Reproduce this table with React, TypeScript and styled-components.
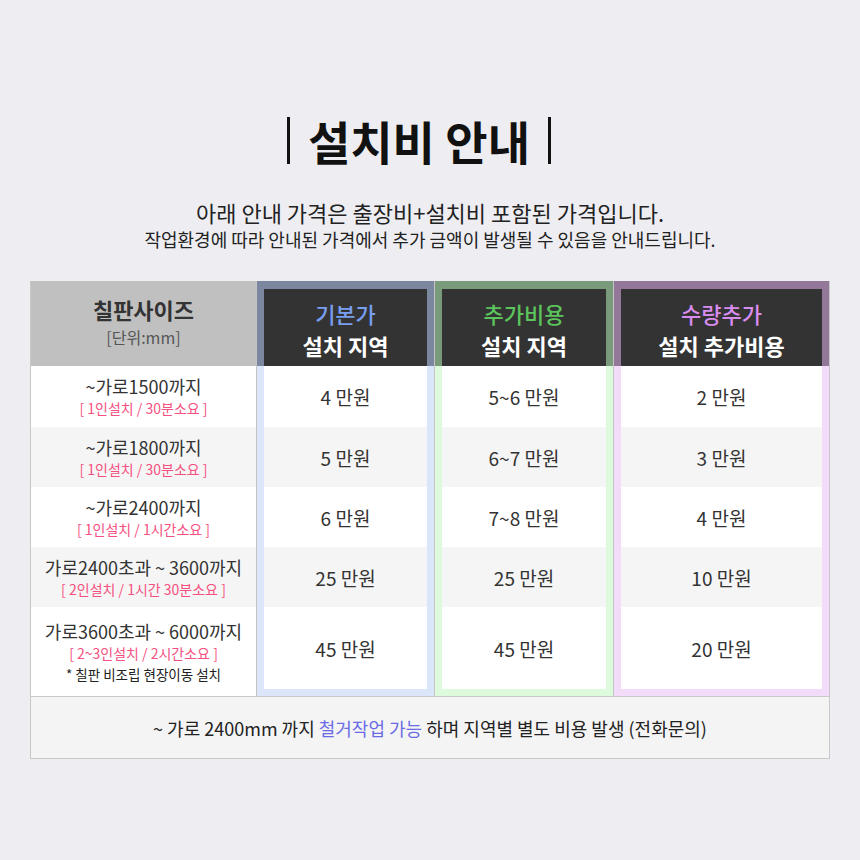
import styled, { createGlobalStyle } from 'styled-components'

const GlobalStyle = createGlobalStyle`
  html, body {
    margin: 0;
    padding: 0;
    background: #eeeef2;
  }
  body {
    font-family: 'Noto Sans CJK KR', 'Noto Sans', sans-serif;
    color: #333;
  }
`

const ROW_HEIGHTS = [61, 60, 60, 60, 89]
const FRAME = 7

type SizeRow = { main: string; sub: string; note?: string }

const sizes: SizeRow[] = [
  { main: '~가로1500까지', sub: '[ 1인설치 / 30분소요 ]' },
  { main: '~가로1800까지', sub: '[ 1인설치 / 30분소요 ]' },
  { main: '~가로2400까지', sub: '[ 1인설치 / 1시간소요 ]' },
  { main: '가로2400초과 ~ 3600까지', sub: '[ 2인설치 / 1시간 30분소요 ]' },
  { main: '가로3600초과 ~ 6000까지', sub: '[ 2~3인설치 / 2시간소요 ]', note: '* 칠판 비조립 현장이동 설치' },
]

const priceColumns = [
  {
    title: '기본가',
    subtitle: '설치 지역',
    accent: '#789ff0',
    frame: '#7b879f',
    tint: '#dce6fa',
    prices: ['4 만원', '5 만원', '6 만원', '25 만원', '45 만원'],
  },
  {
    title: '추가비용',
    subtitle: '설치 지역',
    accent: '#5cc45c',
    frame: '#7a9b7b',
    tint: '#ddfadc',
    prices: ['5~6 만원', '6~7 만원', '7~8 만원', '25 만원', '45 만원'],
  },
  {
    title: '수량추가',
    subtitle: '설치 추가비용',
    accent: '#d98cf0',
    frame: '#94789a',
    tint: '#f3dcfa',
    prices: ['2 만원', '3 만원', '4 만원', '10 만원', '20 만원'],
  },
]

const Page = styled.div`
  width: 860px;
  min-height: 860px;
  padding-top: 112px;
  box-sizing: border-box;
`

const TitleRow = styled.h1`
  margin: 0;
  padding-right: 22px;
  display: flex;
  align-items: center;
  justify-content: center;
  gap: 18px;
  height: 56px;
  font-size: 46px;
  font-weight: 700;
  color: #111;
`

const TitleBar = styled.span`
  display: block;
  width: 3px;
  height: 47px;
  background: #111;
`

const Lead = styled.p<{ $size: number; $lh: number }>`
  margin: 0;
  text-align: center;
  font-size: ${({ $size }) => $size}px;
  line-height: ${({ $lh }) => $lh}px;
  color: #222;
`

const Intro = styled.div`
  margin-top: 30px;
  margin-bottom: 29px;
`

const Table = styled.div`
  margin: 0 30px;
  width: 800px;
  box-sizing: border-box;
  border: 1px solid #c8c8c8;
  border-top: none;
  background: #fff;
`

const Grid = styled.div`
  display: grid;
  grid-template-columns: 225px 178px 179px 1fr;
`

const Column = styled.div<{ $divider?: boolean }>`
  display: flex;
  flex-direction: column;
  border-left: ${({ $divider }) => ($divider ? '1px solid #c4c4c4' : 'none')};
`

const SizeHead = styled.div`
  height: 85px;
  background: #c0c0c0;
  display: flex;
  flex-direction: column;
  align-items: center;
  justify-content: center;
  padding-bottom: 3px;
  box-sizing: border-box;
`

const SizeHeadTitle = styled.div`
  font-size: 22px;
  line-height: 30px;
  font-weight: 700;
  color: #333;
`

const SizeHeadUnit = styled.div`
  font-size: 16px;
  line-height: 26px;
  color: #555;
`

const Cell = styled.div<{ $h: number; $alt: boolean }>`
  height: ${({ $h }) => $h}px;
  background: ${({ $alt }) => ($alt ? '#f5f5f5' : '#fff')};
  display: flex;
  flex-direction: column;
  align-items: center;
  justify-content: center;
  text-align: center;
`

const SizeMain = styled.div`
  font-size: 18px;
  line-height: 24px;
  color: #333;
`

const SizeSub = styled.div`
  font-size: 14px;
  line-height: 21px;
  color: #f5507f;
`

const SizeNote = styled.div`
  font-size: 13.5px;
  line-height: 21px;
  color: #222;
`

const PriceHead = styled.div<{ $frame: string }>`
  height: 85px;
  box-sizing: border-box;
  border: ${FRAME}px solid ${({ $frame }) => $frame};
  border-top-width: 8px;
  border-bottom: none;
  background: #333;
  display: flex;
  flex-direction: column;
  align-items: center;
  justify-content: center;
  padding-top: 2px;
`

const PriceHeadTitle = styled.div<{ $accent: string }>`
  font-size: 22px;
  line-height: 32px;
  font-weight: 500;
  color: ${({ $accent }) => $accent};
`

const PriceHeadSub = styled.div`
  font-size: 22px;
  line-height: 32px;
  font-weight: 700;
  color: #fff;
`

const PriceBody = styled.div<{ $tint: string }>`
  border: ${FRAME}px solid ${({ $tint }) => $tint};
  border-top: none;
  display: flex;
  flex-direction: column;
`

const Price = styled.span`
  font-size: 19px;
  color: #333;
`

const Footer = styled.div`
  height: 61px;
  border-top: 1px solid #c8c8c8;
  background: #f4f4f4;
  display: flex;
  align-items: center;
  justify-content: center;
  font-size: 18px;
  color: #222;
`

const Highlight = styled.span`
  color: #6b6be6;
`

export default function App() {
  return (
    <Page>
      <GlobalStyle />
      <TitleRow>
        <TitleBar />
        설치비 안내
        <TitleBar />
      </TitleRow>
      <Intro>
        <Lead $size={22} $lh={28}>아래 안내 가격은 출장비+설치비 포함된 가격입니다.</Lead>
        <Lead $size={18} $lh={26}>작업환경에 따라 안내된 가격에서 추가 금액이 발생될 수 있음을 안내드립니다.</Lead>
      </Intro>
      <Table>
        <Grid>
          <Column>
            <SizeHead>
              <SizeHeadTitle>칠판사이즈</SizeHeadTitle>
              <SizeHeadUnit>[단위:mm]</SizeHeadUnit>
            </SizeHead>
            {sizes.map((s, i) => (
              <Cell key={s.main} $h={ROW_HEIGHTS[i]} $alt={i % 2 === 1}>
                <SizeMain>{s.main}</SizeMain>
                <SizeSub>{s.sub}</SizeSub>
                {s.note && <SizeNote>{s.note}</SizeNote>}
              </Cell>
            ))}
          </Column>
          {priceColumns.map((col) => (
            <Column key={col.title} $divider>
              <PriceHead $frame={col.frame}>
                <PriceHeadTitle $accent={col.accent}>{col.title}</PriceHeadTitle>
                <PriceHeadSub>{col.subtitle}</PriceHeadSub>
              </PriceHead>
              <PriceBody $tint={col.tint}>
                {col.prices.map((p, i) => (
                  <Cell
                    key={i}
                    $h={i === col.prices.length - 1 ? ROW_HEIGHTS[i] - FRAME : ROW_HEIGHTS[i]}
                    $alt={i % 2 === 1}
                  >
                    <Price>{p}</Price>
                  </Cell>
                ))}
              </PriceBody>
            </Column>
          ))}
        </Grid>
        <Footer>
          ~ 가로 2400mm 까지&nbsp;<Highlight>철거작업 가능</Highlight>&nbsp;하며 지역별 별도 비용 발생 (전화문의)
        </Footer>
      </Table>
    </Page>
  )
}
